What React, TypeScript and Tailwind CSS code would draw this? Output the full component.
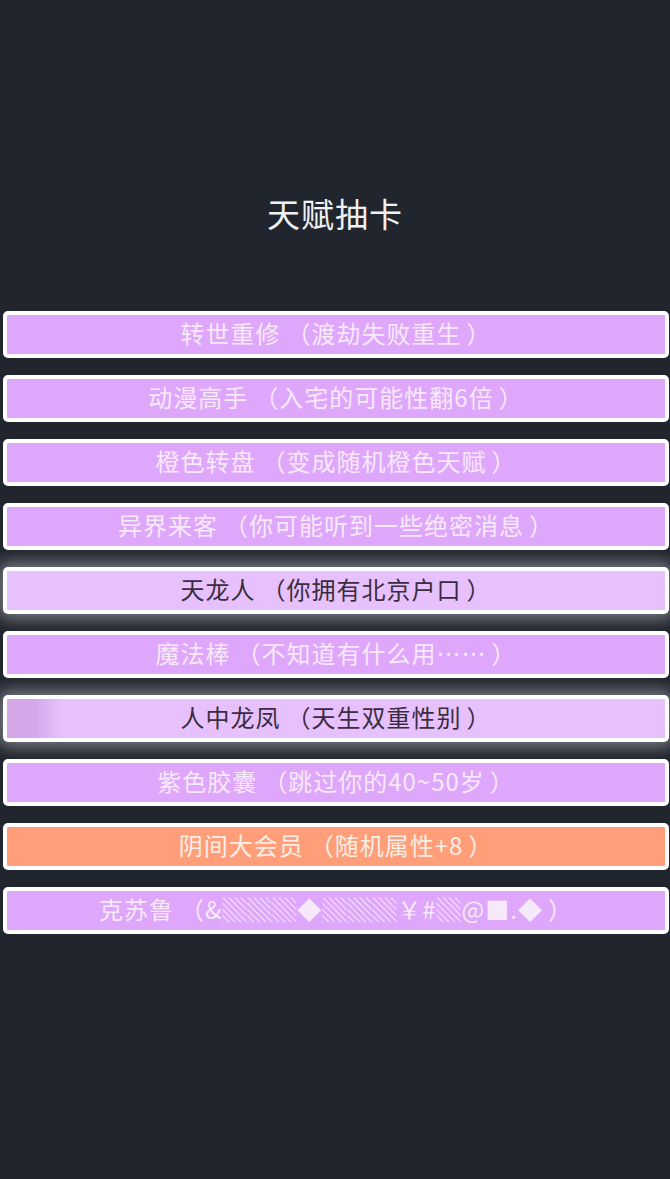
import React from 'react';

type Talent = {
  name: string;
  desc: string;
  tone: 'purple' | 'orange';
  selected?: boolean;
  shimmer?: boolean;
};

const talents: Talent[] = [
  { name: '转世重修', desc: '渡劫失败重生', tone: 'purple' },
  { name: '动漫高手', desc: '入宅的可能性翻6倍', tone: 'purple' },
  { name: '橙色转盘', desc: '变成随机橙色天赋', tone: 'purple' },
  { name: '异界来客', desc: '你可能听到一些绝密消息', tone: 'purple' },
  { name: '天龙人', desc: '你拥有北京户口', tone: 'purple', selected: true },
  { name: '魔法棒', desc: '不知道有什么用……', tone: 'purple' },
  { name: '人中龙凤', desc: '天生双重性别', tone: 'purple', selected: true, shimmer: true },
  { name: '紫色胶囊', desc: '跳过你的40~50岁', tone: 'purple' },
  { name: '阴间大会员', desc: '随机属性+8', tone: 'orange' },
  { name: '克苏鲁', desc: '&▒▒▒◆▒▒▒￥#▒@■.◆', tone: 'purple' },
];

function TalentCard({ talent }: { talent: Talent }) {
  const bg = talent.selected
    ? 'bg-[#e6c1fd] text-[#3b2c3e] shadow-[0_0_16px_5px_rgba(255,255,255,0.4)]'
    : talent.tone === 'orange'
      ? 'bg-[#ff9e78] text-[#fbeee8]'
      : 'bg-[#dfa7fb] text-[#f6e9fa]';

  return (
    <div
      className={`relative ml-[3px] mr-[1px] flex h-[47px] items-center justify-center overflow-hidden rounded-[5px] border-4 border-white ${bg}`}
    >
      {talent.shimmer && (
        <div className="absolute inset-y-0 left-0 w-[55px] bg-gradient-to-r from-[#d4a8e8] via-[#d4a8e8] to-transparent" />
      )}
      <span className="relative -mt-[3px] text-[24px] leading-none tracking-[1px]">
        {talent.name}
        <span className="pl-[6px]">（</span>
        {talent.desc}
        <span className="pl-[5px]">）</span>
      </span>
    </div>
  );
}

export default function App() {
  return (
    <div
      className="min-h-[1179px] w-full bg-[#21252e] pt-[191px]"
      style={{ fontFamily: '"Noto Sans CJK SC", "Noto Sans", sans-serif' }}
    >
      <h1 className="text-center text-[33px] leading-[44px] tracking-[1px] text-[#f1f1f3]">天赋抽卡</h1>

      <div className="mt-[76px] flex flex-col gap-[17px]">
        {talents.map((t) => (
          <TalentCard key={t.name} talent={t} />
        ))}
      </div>
    </div>
  );
}
